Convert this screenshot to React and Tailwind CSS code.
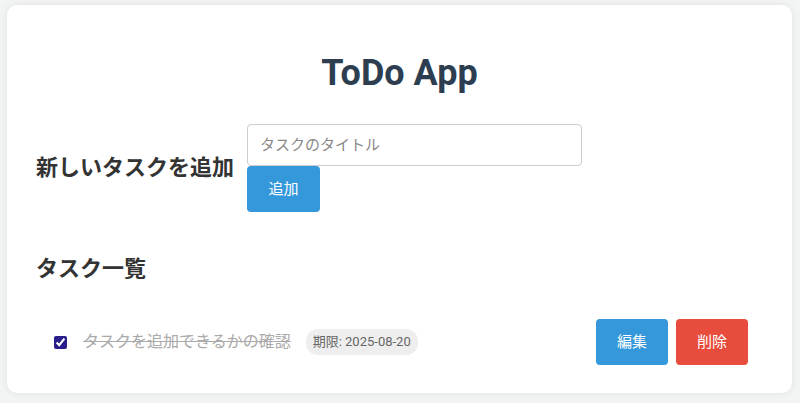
import React, { useState } from 'react';

const font = { fontFamily: 'Roboto, "Noto Sans CJK JP", sans-serif' };

export default function App() {
    const [title, setTitle] = useState('');
    const [tasks, setTasks] = useState([
        { id: 1, title: 'タスクを追加できるかの確認', due: '2025-08-20', done: true },
    ]);

    const toggle = (id) =>
        setTasks(tasks.map(t => (t.id === id ? { ...t, done: !t.done } : t)));

    return (
        <div style={font} className="min-h-screen bg-[#f3f4f4] pl-[7px] pr-[8px] pt-[5px] pb-[10px]">
            <div className="bg-white rounded-[10px] shadow-[0_0_8px_rgba(0,0,0,0.08)] px-[29px] pt-[42px] pb-[28px] h-[388px]">
                {/* Title */}
                <h1 className="text-center text-[36px] font-bold text-[#2c3e50] leading-[52px]">ToDo App</h1>

                {/* Add form */}
                <div className="flex items-center mt-[25px]">
                    <h2 className="text-[22px] font-bold text-[#333] mr-[13px] leading-none">新しいタスクを追加</h2>
                    <div className="flex flex-col items-start">
                        <input
                            type="text"
                            value={title}
                            onChange={e => setTitle(e.target.value)}
                            placeholder="タスクのタイトル"
                            className="w-[335px] h-[42px] border border-[#ccc] rounded-[4px] px-[12px] text-[15px] text-[#333] placeholder:text-[#888] outline-none"
                        />
                        <button className="w-[73px] h-[46px] bg-[#3498db] text-white text-[15px] rounded-[4px]">
                            追加
                        </button>
                    </div>
                </div>

                {/* Task list */}
                <h2 className="text-[22px] font-bold text-[#333] mt-[46px] leading-none">タスク一覧</h2>

                <ul className="mt-[39px]">
                    {tasks.map(task => (
                        <li key={task.id} className="flex items-center pl-[18px] pr-[15px]">
                            <input
                                type="checkbox"
                                checked={task.done}
                                onChange={() => toggle(task.id)}
                                className="w-[13px] h-[13px] accent-[#2a1e8c]"
                            />
                            <span className={`ml-[16px] text-[16px] ${task.done ? 'line-through text-[#aaa]' : 'text-[#333]'}`}>
                                {task.title}
                            </span>
                            <span className="ml-[15px] bg-[#eee] text-[#666] text-[13px] font-normal rounded-[12px] px-[7px] h-[26px] leading-[26px]">
                                期限: {task.due}
                            </span>
                            <div className="ml-auto flex gap-[8px]">
                                <button className="w-[72px] h-[46px] bg-[#3498db] text-white text-[15px] rounded-[4px]">編集</button>
                                <button className="w-[72px] h-[46px] bg-[#e74c3c] text-white text-[15px] rounded-[4px]">削除</button>
                            </div>
                        </li>
                    ))}
                </ul>
            </div>
        </div>
    );
}
